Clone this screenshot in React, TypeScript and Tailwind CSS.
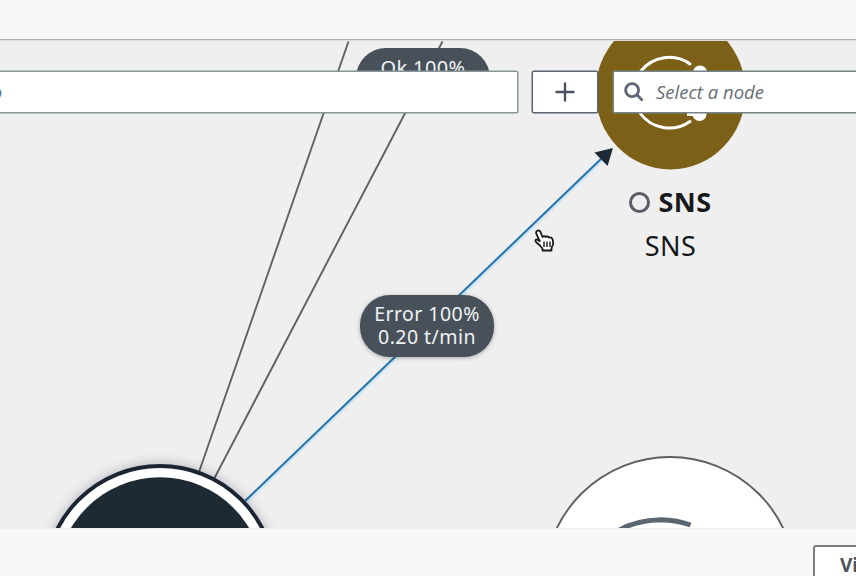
import React from "react";

function GraphEdges() {
  return (
    <svg className="absolute inset-0" width="856" height="487" viewBox="0 41 856 487" fill="none">
      <defs>
        <filter id="glow" x="-10%" y="-10%" width="120%" height="120%">
          <feDropShadow dx="0.5" dy="1" stdDeviation="1.3" floodColor="#6cc6f5" floodOpacity="0.6" />
        </filter>
      </defs>
      <g stroke="#616062" strokeWidth="1.900">
        <path d="M348.500 41.500L199 472" />
        <path d="M442.500 41.500L214 479" />
      </g>
      <path d="M245 501L603 157" stroke="#2571a8" strokeWidth="2" filter="url(#glow)" />
      <path d="M613 148L594.500 152.500L607.500 166Z" fill="#1e2a36" />
    </svg>
  );
}

function GraphNodes() {
  return (
    <svg className="absolute inset-0" width="856" height="487" viewBox="0 41 856 487" fill="none">
      <defs>
        <filter id="nodeShadow" x="-20%" y="-20%" width="140%" height="140%">
          <feDropShadow dx="0" dy="0" stdDeviation="6" floodColor="#1e2832" floodOpacity="0.28" />
        </filter>
      </defs>

      <ellipse cx="670.500" cy="92" rx="75" ry="77.500" fill="#7d6018" />
      <g stroke="#ffffff" strokeWidth="3" strokeLinecap="round">
        <path d="M641 71 A36 36 0 0 1 690 64" />
        <path d="M640 113 A36 36 0 0 0 690 121.500" />
      </g>
      <circle cx="700" cy="72.500" r="7" fill="#ffffff" />
      <circle cx="699.500" cy="114" r="7" fill="#ffffff" />
      <path d="M687 114.500H700" stroke="#ffffff" strokeWidth="3" />

      <circle cx="670" cy="582.500" r="125.500" fill="#ffffff" stroke="#605f60" strokeWidth="1.900" />
      <path d="M618 531 Q634 520.500 661 519.700 Q677 520 690.500 525" stroke="#5b6670" strokeWidth="5" />

      <circle cx="160" cy="581" r="115" fill="#ffffff" stroke="#1c2733" strokeWidth="4" filter="url(#nodeShadow)" />
      <circle cx="160" cy="581" r="103.700" fill="#1e2a33" />
    </svg>
  );
}

function HandCursor() {
  return (
    <svg className="absolute left-[533px] top-[188px]" width="22" height="24" viewBox="0 0 22 24">
      <path
        d="M4 2C5.500 .8 7 1.800 7.600 3.200L9.500 8C10.400 6.800 12 7 12.600 8C13.800 7 15.200 7.400 15.800 8.600C17.500 8 19.500 9 19.800 11L20.200 15L18.500 19V21.500H9.500V19.500L7 16.500L3.500 13.500C1.200 11.500 2.800 9.800 5 11L6.800 12.200L3.500 5.200C2.900 3.900 3.200 2.600 4 2Z"
        fill="#fff"
        stroke="#18181c"
        strokeWidth="1.800"
        strokeLinejoin="round"
      />
      <path d="M11 12.500V18M14 12.500V18M17 12.500V18" stroke="#18181c" strokeWidth="1.400" />
    </svg>
  );
}

function Toolbar() {
  return (
    <div className="absolute left-0 top-[30px] flex h-[42px] w-[900px] font-['Open_Sans','Noto_Sans',sans-serif]">
      <div className="flex w-[518px] shrink-0 items-center overflow-hidden rounded-r-[2px] border border-l-0 border-[#879596] bg-white shadow-[0_0_0_0.500px_#879596]">
        <span className="-ml-[8px] text-[18px] font-medium italic text-[#606b76]">o</span>
      </div>
      <button className="ml-[14px] flex w-[66px] shrink-0 items-center justify-center rounded-[2px] border border-[#596470] bg-white shadow-[0_0_0_0.500px_#596470]">
        <svg width="20" height="20" viewBox="0 0 20 20" stroke="#4b535e" strokeWidth="2.400">
          <path d="M.5 10H19.500M10 .5V19.500" />
        </svg>
      </button>
      <div className="ml-[15px] flex grow items-center rounded-[2px] border border-[#778487] bg-white pl-[10px] shadow-[0_0_0_0.500px_#778487]">
        <svg width="20" height="20" viewBox="0 0 21 21" fill="none" stroke="#5d6976" strokeWidth="3">
          <circle cx="8.500" cy="8.500" r="6.800" />
          <path d="M13.500 13.500L19.500 19.500" />
        </svg>
        <span className="ml-[12px] whitespace-nowrap text-[18.500px] font-medium italic text-[#656e76]">
          Select a node
        </span>
      </div>
    </div>
  );
}

export default function App() {
  return (
    <div className="flex h-[576px] w-[856px] flex-col overflow-hidden bg-[#f8f8f8] font-['Noto_Sans','Open_Sans',sans-serif]">
      <header className="h-[40px] shrink-0 border-b border-[#b0b1b1] bg-[#f8f8f8]" />
      <main className="relative h-[488px] shrink-0 overflow-hidden border-t border-[#dedede] bg-[#efefef]">
        <GraphEdges />
        <GraphNodes />
        <div className="absolute left-[356px] top-[7px] flex h-[61px] w-[134px] flex-col items-center rounded-[30px] bg-[#48515a] pt-[8px] text-[20px] leading-[23px] tracking-[0.400px] text-[#f0f2f4]">
          <span className="whitespace-nowrap">Ok 100%</span>
        </div>
        <div className="absolute left-[360px] top-[254px] flex h-[62px] w-[134px] flex-col items-center justify-center rounded-[30px] bg-[#48515a] pb-[2px] text-[19.500px] leading-[23px] tracking-[0.450px] text-[#f0f2f4] shadow-[0_1px_4px_rgba(0,0,0,0.3)]">
          <span className="whitespace-nowrap">Error 100%</span>
          <span className="whitespace-nowrap">0.20 t/min</span>
        </div>
        <div className="absolute left-[570px] top-[141px] flex w-[201px] flex-col items-center text-[#17181a]">
          <div className="flex h-[40px] items-center gap-[8px]">
            <span className="size-[21px] rounded-full border-[3.500px] border-[#5d5d67]" />
            <span className="text-[27px] font-bold leading-[40px] tracking-[0.500px]">SNS</span>
          </div>
          <span className="mt-[4px] text-[27px] leading-[40px] tracking-[0.400px]">SNS</span>
        </div>
        <HandCursor />
        <Toolbar />
      </main>
      <footer className="flex grow items-start justify-end border-t border-[#eeeeee] bg-[#f8f8f8] pt-[16px]">
        <button className="-mr-[80px] h-[44px] w-[123px] rounded-[3px] border-2 border-[#7b8183] bg-white pl-[25px] text-left font-['Open_Sans','Noto_Sans',sans-serif] text-[19px] font-bold leading-[36px] text-[#4c545c]">
          <span className="block h-[40px]">View</span>
        </button>
      </footer>
    </div>
  );
}
